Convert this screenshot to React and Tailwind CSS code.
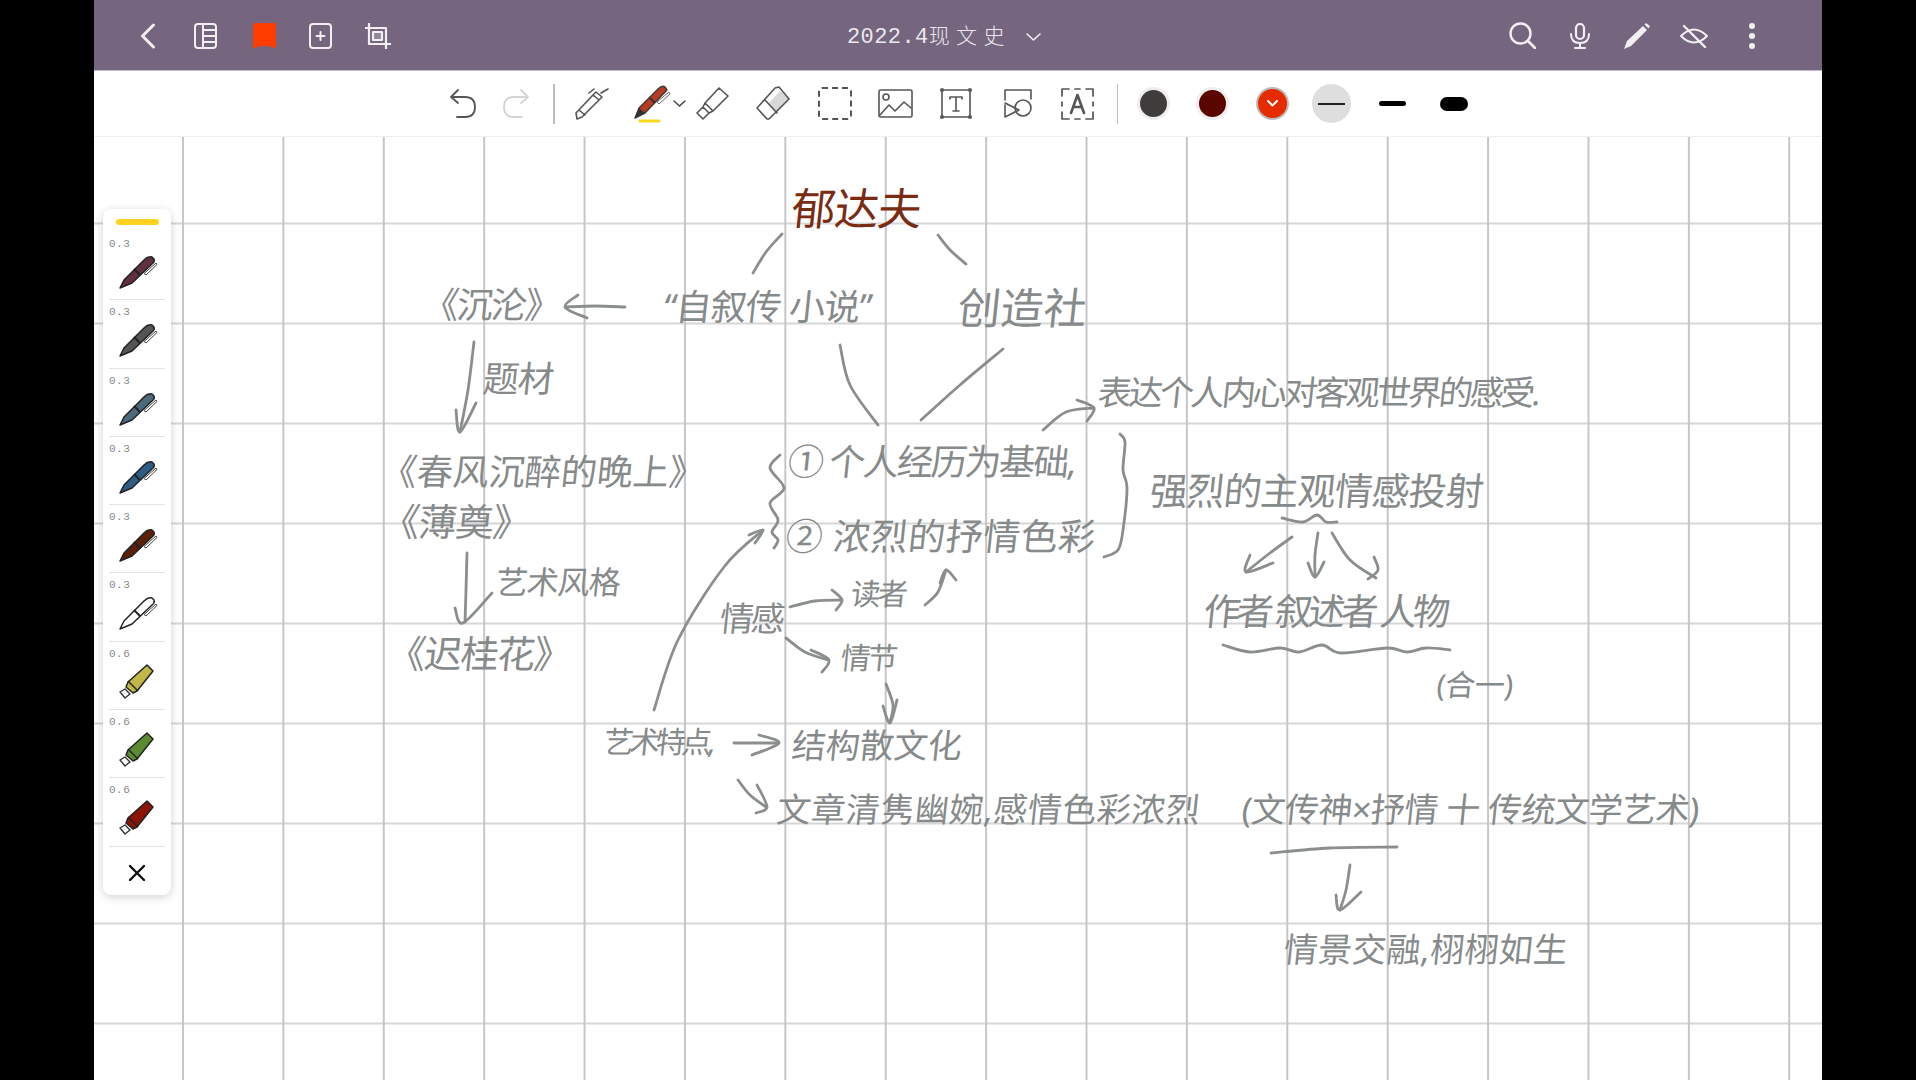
import React from "react";

const cjk = "font-['Noto_Sans','Noto_Sans_CJK_SC',sans-serif]";

function Ic({ w, h, vb, className = "", children, sw = 2, stroke = "currentColor", fill = "none" }) {
  return (
    <svg width={w} height={h} viewBox={vb || `0 0 ${w} ${h}`} className={"shrink-0 " + className} fill={fill} stroke={stroke} strokeWidth={sw} strokeLinecap="round" strokeLinejoin="round">
      {children}
    </svg>
  );
}

function Pen({ color }) {
  return (
    <svg width="39" height="34" viewBox="0 0 39 34" className="mt-[6px] ml-[10px] block">
      <path d="M1 33 L5 25 L25 5 Q29 1 33 2 L35 4 Q36 7 33 9 L13 28 Z" fill={color} stroke="#222" strokeWidth="1.5" strokeLinejoin="round" />
      <path d="M15 14 L21 20" stroke="#222" strokeWidth="2" />
      <path d="M37 8 L38 9.5 L27 20 L25 18.5 Z" fill="#fff" stroke="#444" strokeWidth="1" strokeLinejoin="round" />
    </svg>
  );
}

function Marker({ color }) {
  return (
    <svg width="36" height="35" viewBox="0 0 36 35" className="mt-[5px] ml-[10px] block">
      <path d="M9 18 L28 1 L34 7 L18 27 L14 29 L7 23 Z" fill={color} stroke="#222" strokeWidth="1.5" strokeLinejoin="round" />
      <path d="M9 17 L19 27" stroke="#222" strokeWidth="1.4" />
      <path d="M1 28 L6 25 L11 30 L6 34 Z" fill="#fff" stroke="#333" strokeWidth="1.4" strokeLinejoin="round" />
    </svg>
  );
}

const tools = [
  ["0.3", "#5e3040", "p"],
  ["0.3", "#555555", "p"],
  ["0.3", "#4d6a7c", "p"],
  ["0.3", "#2f5c84", "p"],
  ["0.3", "#5c2008", "p"],
  ["0.3", "#ffffff", "p"],
  ["0.6", "#c2b84a", "m"],
  ["0.6", "#5c8a30", "m"],
  ["0.6", "#8a1505", "m"],
];

function smooth(pts) {
  let d = `M${pts[0][0]} ${pts[0][1]}`;
  for (let i = 0; i < pts.length - 1; i++) {
    const p0 = pts[i - 1] || pts[i];
    const p1 = pts[i];
    const p2 = pts[i + 1];
    const p3 = pts[i + 2] || p2;
    const c1 = [p1[0] + (p2[0] - p0[0]) / 6, p1[1] + (p2[1] - p0[1]) / 6];
    const c2 = [p2[0] - (p3[0] - p1[0]) / 6, p2[1] - (p3[1] - p1[1]) / 6];
    d += ` C${c1[0]} ${c1[1]} ${c2[0]} ${c2[1]} ${p2[0]} ${p2[1]}`;
  }
  return d;
}

const strokes = [
  [[782, 234], [766, 252], [753, 273]],
  [[938, 235], [950, 250], [966, 264]],
  [[625, 307], [595, 306], [565, 307]],
  [[578, 295], [565, 307], [587, 318]],
  [[474, 342], [468, 390], [460, 432]],
  [[456, 410], [460, 432], [476, 403]],
  [[840, 345], [850, 385], [878, 425]],
  [[1003, 349], [960, 385], [921, 420]],
  [[1043, 430], [1066, 412], [1094, 408]],
  [[1077, 400], [1094, 408], [1087, 421]],
  [[1120, 434], [1125, 442], [1123, 470], [1127, 488], [1123, 530], [1118, 550], [1104, 557]],
  [[1282, 518], [1303, 522], [1317, 515], [1326, 522], [1337, 522]],
  [[1292, 537], [1270, 553], [1246, 572]],
  [[1250, 555], [1246, 572], [1273, 563]],
  [[1318, 533], [1315, 555], [1315, 577]],
  [[1308, 563], [1315, 577], [1324, 562]],
  [[1332, 533], [1350, 560], [1376, 578]],
  [[1374, 557], [1378, 570], [1368, 579]],
  [[1223, 645], [1250, 652], [1280, 648], [1299, 652], [1322, 645], [1341, 653], [1387, 648], [1407, 652], [1426, 648], [1450, 650]],
  [[780, 455], [770, 468], [784, 488], [770, 503], [778, 520], [772, 532], [778, 540], [774, 548]],
  [[654, 710], [678, 640], [724, 567], [763, 530]],
  [[749, 535], [763, 530], [755, 543]],
  [[467, 553], [466, 590], [465, 622]],
  [[455, 608], [463, 623], [492, 593]],
  [[790, 607], [815, 601], [842, 600]],
  [[832, 590], [842, 600], [836, 610]],
  [[786, 638], [805, 652], [828, 660]],
  [[811, 650], [829, 660], [822, 672]],
  [[925, 605], [938, 592], [946, 570]],
  [[940, 583], [946, 570], [956, 580]],
  [[886, 684], [893, 705], [890, 722]],
  [[883, 706], [890, 723], [897, 700]],
  [[734, 743], [755, 743], [777, 743]],
  [[759, 735], [779, 743], [752, 755]],
  [[738, 780], [750, 795], [766, 807]],
  [[757, 785], [767, 807], [756, 813]],
  [[1271, 853], [1330, 848], [1397, 847]],
  [[1350, 865], [1346, 890], [1340, 910]],
  [[1336, 895], [1340, 910], [1361, 892]],
];

const notes = [
  ["郁达夫", "left-[698px] top-[49px] text-[44px] tracking-[-1px] text-[#7a2c12]"],
  ["“自叙传 小说”", "left-[570px] top-[152px] text-[36px] tracking-[-1px] text-[#868a8a]"],
  ["创造社", "left-[864px] top-[149px] text-[43px] tracking-[0px] text-[#868a8a]"],
  ["《沉沦》", "left-[329px] top-[150px] text-[36px] tracking-[-2px] text-[#868a8a]"],
  ["题材", "left-[389px] top-[224px] text-[36px] tracking-[-1px] text-[#868a8a]"],
  ["《春风沉醉的晚上》", "left-[287px] top-[317px] text-[36px] tracking-[0px] text-[#868a8a]"],
  ["《薄奠》", "left-[288px] top-[365px] text-[38px] tracking-[-1px] text-[#868a8a]"],
  ["艺术风格", "left-[402px] top-[429px] text-[32px] tracking-[-1px] text-[#868a8a]"],
  ["《迟桂花》", "left-[294px] top-[497px] text-[38px] tracking-[-1.5px] text-[#868a8a]"],
  ["① 个人经历为基础,", "left-[694px] top-[307px] text-[36px] tracking-[-2px] text-[#868a8a]"],
  ["② 浓烈的抒情色彩", "left-[692px] top-[380px] text-[37px] tracking-[0.5px] text-[#868a8a]"],
  ["读者", "left-[757px] top-[442px] text-[30px] tracking-[-3px] text-[#868a8a]"],
  ["情感", "left-[626px] top-[464px] text-[34px] tracking-[-3px] text-[#868a8a]"],
  ["情节", "left-[747px] top-[506px] text-[30px] tracking-[-3px] text-[#868a8a]"],
  ["艺术特点,", "left-[510px] top-[590px] text-[30px] tracking-[-4px] text-[#868a8a]"],
  ["结构散文化", "left-[698px] top-[591px] text-[34px] tracking-[0px] text-[#868a8a]"],
  ["文章清隽幽婉,感情色彩浓烈", "left-[683px] top-[655px] text-[34px] tracking-[0.5px] text-[#868a8a]"],
  ["(文传神×抒情 十 传统文学艺术)", "left-[1148px] top-[655px] text-[34px] tracking-[-0.5px] text-[#868a8a]"],
  ["情景交融,栩栩如生", "left-[1190px] top-[795px] text-[34px] tracking-[0.3px] text-[#868a8a]"],
  ["表达个人内心对客观世界的感受.", "left-[1004px] top-[238px] text-[34px] tracking-[-3px] text-[#868a8a]"],
  ["强烈的主观情感投射", "left-[1056px] top-[334px] text-[38px] tracking-[-1px] text-[#868a8a]"],
  ["作者 叙述者 人物", "left-[1110px] top-[455px] text-[37px] tracking-[-4px] text-[#868a8a]"],
  ["(合一)", "left-[1343px] top-[533px] text-[30px] tracking-[-0.5px] text-[#868a8a]"],
];

export default function App() {
  return (
    <div className="w-[1916px] h-[1080px] bg-black flex justify-center overflow-hidden">
      <div className="w-[1728px] h-full flex flex-col bg-white">
        <header className="h-[71px] shrink-0 pt-[1px] bg-[#75657e] border-b border-[#c4b6cc] flex items-center text-[#f2eff3]">
          <div className="flex items-center ml-[46px]">
            <Ic w={16} h={26}><path d="M13.5 2 L2.5 13 L13.5 24" strokeWidth="3" /></Ic>
            <Ic w={23} h={26} className="ml-[38px]">
              <rect x="1" y="1" width="21" height="24" rx="3" />
              <path d="M9 1 V25 M9 7 H22 M9 13 H22 M9 19 H22" />
            </Ic>
            <svg width="23" height="26" viewBox="0 0 23 26" className="ml-[36px]">
              <path d="M0 2 Q0 0 2 0 H21 Q23 0 23 2 V26 Q20 23 11.5 23 Q3 23 0 26 Z" fill="#ff3d00" />
            </svg>
            <Ic w={23} h={26} className="ml-[33px]">
              <rect x="1" y="1" width="21" height="24" rx="3" />
              <path d="M11.5 9 V17 M7.5 13 H15.5" />
            </Ic>
            <Ic w={26} h={26} className="ml-[33px]" sw={2.2}>
              <path d="M4 0 V21 H26 M0 5 H21 V26" />
              <rect x="8" y="9" width="9" height="8" fill="currentColor" fillOpacity="0.25" />
            </Ic>
          </div>
          <div className={"flex items-baseline ml-[456px] mt-[3px] font-light text-[#ece8ee] " + cjk}>
            <span className="font-['Liberation_Mono','Noto_Sans_CJK_SC',monospace] text-[22px] tracking-[0.4px]">2022.4</span>
            <span className="text-[21px] tracking-[6.5px]">现文史</span>
          </div>
          <Ic w={15} h={8} className="ml-[15px] mt-[2px]" sw={1.6}><path d="M1 1 L7.5 7 L14 1" /></Ic>
          <div className="flex items-center ml-auto mr-[67px]">
            <Ic w={27} h={27}>
              <circle cx="11.5" cy="11.5" r="10" strokeWidth="2.4" />
              <path d="M19 19 L26 26" strokeWidth="2.6" />
            </Ic>
            <Ic w={20} h={26} className="ml-[34px]">
              <rect x="6" y="1" width="8" height="15" rx="4" strokeWidth="2.2" />
              <path d="M1 11 Q1 20 10 20 Q19 20 19 11 M10 20 V25 M5 25 H15" />
            </Ic>
            <svg width="26" height="26" viewBox="0 0 26 26" className="ml-[34px]">
              <path d="M0 26 L3 18 L19 3 L23 7 L7 23 Z" fill="#f2eff3" />
              <path d="M20.5 1.5 L22 0 L26 3 L24.5 5.5 Z" fill="#f2eff3" />
            </svg>
            <Ic w={28} h={24} className="ml-[30px]">
              <path d="M1 12 Q14 -1 27 12 Q14 25 1 12 Z" />
              <path d="M4 2 L25 23" strokeWidth="2.4" />
            </Ic>
            <div className="flex flex-col gap-[4px] ml-[41px]">
              <span className="w-[6px] h-[6px] rounded-full bg-[#f2eff3]" />
              <span className="w-[6px] h-[6px] rounded-full bg-[#f2eff3]" />
              <span className="w-[6px] h-[6px] rounded-full bg-[#f2eff3]" />
            </div>
          </div>
        </header>

        <div className="h-[65px] shrink-0 bg-white flex items-center pl-[355px] text-[#555]">
          <Ic w={27} h={29} sw={1.8}>
            <path d="M9 1 L2 8 L9 14 M2 8 H16 Q26 8 26 18 Q26 28 16 28 H8" />
          </Ic>
          <Ic w={27} h={29} className="ml-[27px] text-[#d4d4d4]" sw={1.8}>
            <path d="M18 1 L25 8 L18 14 M25 8 H11 Q1 8 1 18 Q1 28 11 28 H19" />
          </Ic>
          <div className="w-[1.5px] h-[40px] bg-[#bdbdbd] ml-[23px]" />
          <Ic w={34} h={32} className="ml-[20px]" sw={1.6} vb="0 0 34 32">
            <path d="M2 31 L1 25 L18 7 L24 12 L7 29 Z M18 7 L21 4 L27 9 L24 12 M26 5 L33 1 M4 22 L10 27" />
            <path d="M14 5 L19 1" />
          </Ic>
          <svg width="37" height="38" viewBox="0 0 37 38" className="ml-[25px]">
            <path d="M1 33 L5 23 L24 4 Q28 0 31 2 L33 5 L11 28 Z" fill="#b83a22" stroke="#3a3a3a" strokeWidth="1.4" strokeLinejoin="round" />
            <path d="M1 33 L5 23 L11 28 Z" fill="#333" />
            <path d="M16 13 L21 18" stroke="#333" strokeWidth="2" />
            <path d="M35 7 L36 9 L25 19 L23 17 Z" fill="#fff" stroke="#666" strokeWidth="1" />
            <path d="M6 36 H25" stroke="#f6da1e" strokeWidth="3" strokeLinecap="round" />
          </svg>
          <Ic w={13} h={7} className="ml-[2px] text-[#444]" sw={1.5}><path d="M1 1 L6.5 6 L12 1" /></Ic>
          <Ic w={35} h={33} className="ml-[8px]" sw={1.6}>
            <path d="M11 16 L25 1 L34 9 L19 24 L11 16 Z M9 20 L11 16 L19 24 L15 26 Z M9 20 L15 26 L9 32 L3 26 Z" />
          </Ic>
          <Ic w={35} h={35} className="ml-[26px]" sw={1.6}>
            <path d="M22 27 L34 13 L25 5 L13 18 Z" fill="#d8d8d8" stroke="none" />
            <path d="M2 22 L20 2 L24 1 L34 13 L14 33 L12 33 Z M10 14 L22 27" />
          </Ic>
          <div className="w-[34px] h-[33px] ml-[28px] border-2 border-dashed border-[#555] rounded-[4px]" />
          <Ic w={35} h={29} className="ml-[26px]" sw={1.6}>
            <rect x="1" y="1" width="33" height="27" rx="1.5" />
            <circle cx="8" cy="8" r="3" />
            <path d="M2 26 L11 16 L17 22 L26 13 L33 19" />
          </Ic>
          <Ic w={32} h={31} className="ml-[27px]" sw={1.6}>
            <rect x="2" y="2" width="28" height="27" />
            <path d="M10 9 H22 M10 9 V11 M22 9 V11 M16 9 V23 M13 23 H19" />
            <path d="M1 1 H3 V3 H1 Z M29 1 H31 V3 H29 Z M1 28 H3 V30 H1 Z M29 28 H31 V30 H29 Z" fill="currentColor" />
          </Ic>
          <Ic w={30} h={31} className="ml-[31px]" sw={1.6}>
            <path d="M2 12 V2 H28 V11 M2 17 V29 L16 22 L2 15" />
            <circle cx="20" cy="20" r="8" />
          </Ic>
          <Ic w={33} h={32} className="ml-[28px]" sw={1.7}>
            <path d="M1 8 V1 H8 M25 1 H32 V8 M1 24 V31 H8 M25 31 H32 V24 M1 14 V18 M32 14 V18 M14 1 H19 M14 31 H19" />
            <path d="M10 25 L16.5 7 L23 25 M12.5 19 H20.5" strokeWidth="2.6" />
          </Ic>
          <div className="w-[1.5px] h-[40px] bg-[#bdbdbd] ml-[23px]" />
          <div className="w-[27px] h-[27px] rounded-full bg-[#413c3c] ring-[3px] ring-[#eeeeee] ml-[22px]" />
          <div className="w-[27px] h-[27px] rounded-full bg-[#5a0500] ring-[3px] ring-[#eeeeee] ml-[32px]" />
          <div className="w-[29px] h-[29px] rounded-full bg-[#e62b00] ring-[2px] ring-[#bbbbbb] ml-[32px] flex items-center justify-center text-white">
            <Ic w={11} h={7} sw={2}><path d="M1 1 L5.5 5.5 L10 1" /></Ic>
          </div>
          <div className="w-[39px] h-[39px] rounded-full bg-[#dedede] ml-[25px] flex items-center justify-center">
            <div className="w-[27px] h-[2px] bg-[#222]" />
          </div>
          <div className="w-[27px] h-[5px] rounded-full bg-black ml-[28px]" />
          <div className="w-[28px] h-[14px] rounded-[7px] bg-black ml-[34px]" />
        </div>

        <main className="relative flex-1 border-t border-[#eeeeee] bg-white bg-[linear-gradient(to_right,#c6c6c6_1.5px,transparent_1.5px),linear-gradient(to_bottom,#d6d6d6_2px,transparent_2px)] bg-[size:100.4px_100px] bg-[position:88px_85.5px]">
          <svg className="absolute left-0 top-0 w-full h-full" viewBox="94 137 1728 943" fill="none" stroke="#8a8e8e" strokeWidth="2.8" strokeLinecap="round" strokeLinejoin="round">
            {strokes.map((p, i) => (
              <path key={i} d={smooth(p)} />
            ))}
          </svg>

          {notes.map(([t, c]) => (
            <span key={t} className={"absolute whitespace-pre leading-none -skew-x-6 " + cjk + " " + c}>
              {t}
            </span>
          ))}

          <aside className="absolute left-[9px] top-[72px] w-[68px] h-[686px] bg-white rounded-[8px] shadow-[0_2px_10px_rgba(0,0,0,0.18)] px-[6px]">
            <div className="h-[6px] w-[43px] bg-[#ffd21f] rounded-full ml-[7px] mt-[10px] mb-[7px]" />
            {tools.map(([l, col, k], i) => (
              <div key={i} className="h-[68.3px] border-b-[1.5px] border-[#e2e2e2] pt-[7px]">
                <div className="font-['Liberation_Mono',monospace] text-[11px] leading-[11px] tracking-[0.5px] text-[#888888]">{l}</div>
                {k === "p" ? <div className="-mt-[1px]"><Pen color={col} /></div> : <div className="-mt-[1px]"><Marker color={col} /></div>}
              </div>
            ))}
            <div className="h-[49px] pt-[3px] flex items-center justify-center">
              <Ic w={16} h={16} stroke="#111" sw={2.4}><path d="M1 1 L15 15 M15 1 L1 15" /></Ic>
            </div>
          </aside>
        </main>
      </div>
    </div>
  );
}
